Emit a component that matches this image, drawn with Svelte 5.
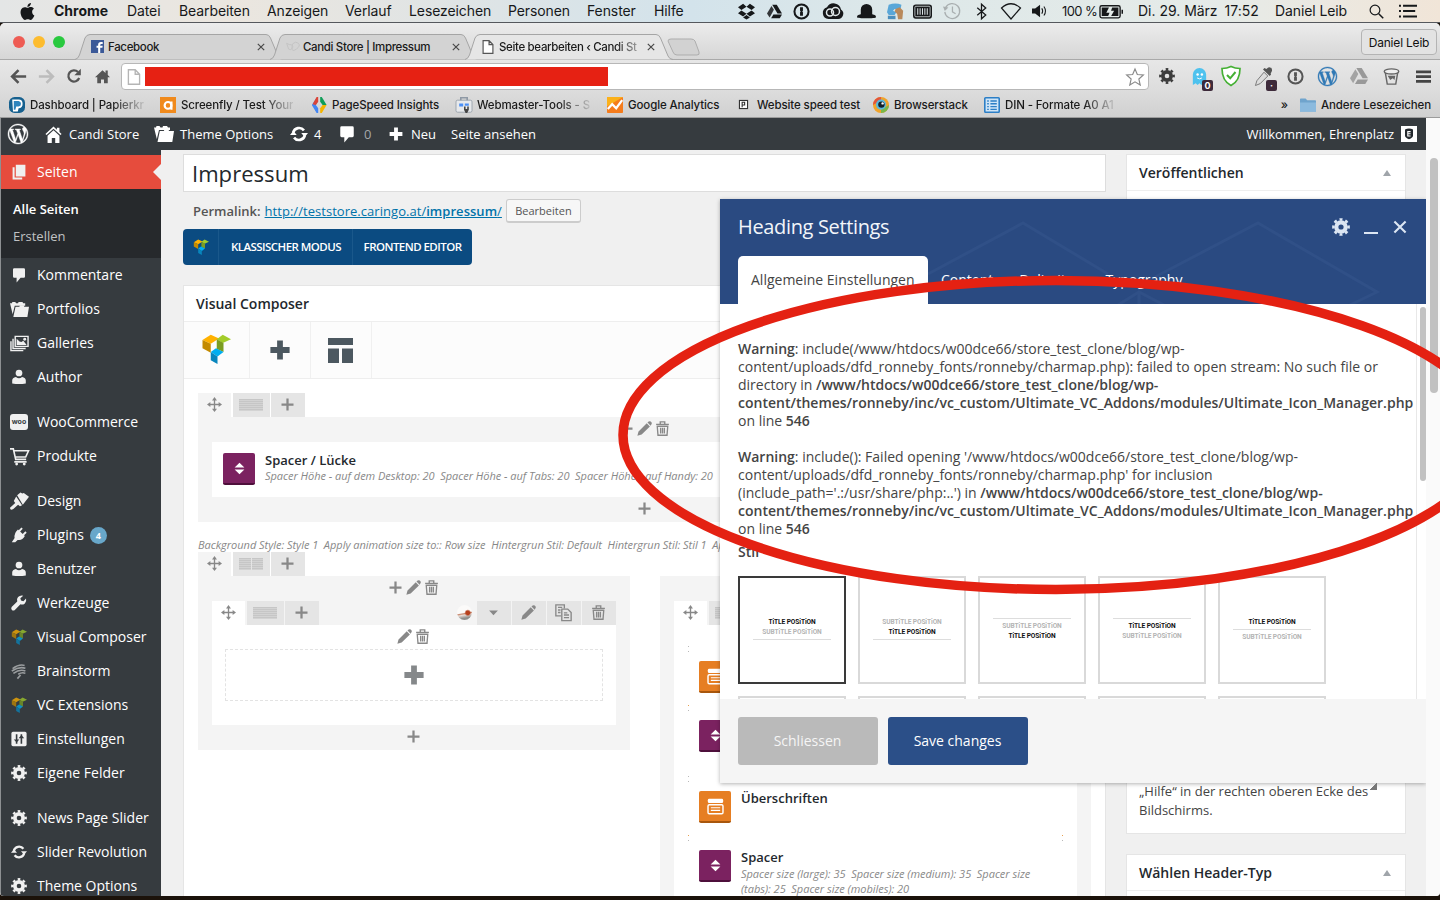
<script lang="ts">
	type MenuItem = { icon: string; label: string; gap?: boolean; count?: number };

	const WP_LOGO =
		'M21.469 6.825c.84 1.537 1.318 3.3 1.318 5.175 0 3.979-2.156 7.456-5.363 9.325l3.295-9.527c.615-1.54.82-2.771.82-3.864 0-.405-.026-.78-.07-1.11m-7.981.105c.647-.03 1.232-.105 1.232-.105.582-.075.514-.93-.067-.899 0 0-1.755.135-2.88.135-1.064 0-2.85-.15-2.85-.15-.585-.03-.661.855-.075.885 0 0 .54.061 1.125.09l1.68 4.605-2.37 7.08L5.354 6.9c.649-.03 1.234-.1 1.234-.1.585-.075.516-.93-.065-.896 0 0-1.746.138-2.874.138-.2 0-.438-.008-.69-.015C4.911 3.15 8.235 1.215 12 1.215c2.809 0 5.365 1.072 7.286 2.833-.046-.003-.091-.009-.141-.009-1.06 0-1.812.923-1.812 1.914 0 .89.513 1.643 1.06 2.531.411.72.89 1.643.89 2.977 0 .915-.354 1.994-.821 3.479l-1.075 3.585-3.9-11.61zM12 22.784c-1.059 0-2.081-.153-3.048-.437l3.237-9.406 3.315 9.087c.024.053.05.101.078.149-1.12.393-2.325.609-3.582.609M1.211 12c0-1.564.336-3.05.935-4.39L7.29 21.709C3.694 19.96 1.212 16.271 1.211 12M12 0C5.385 0 0 5.385 0 12s5.385 12 12 12 12-5.385 12-12S18.615 0 12 0';
	const APPLE =
		'M12.152 6.896c-.948 0-2.415-1.078-3.96-1.04-2.04.027-3.91 1.183-4.961 3.014-2.117 3.675-.546 9.103 1.519 12.09 1.013 1.454 2.208 3.09 3.792 3.039 1.52-.065 2.09-.987 3.935-.987 1.831 0 2.35.987 3.96.948 1.637-.026 2.676-1.48 3.676-2.948 1.156-1.688 1.636-3.325 1.662-3.415-.039-.013-3.182-1.221-3.22-4.857-.026-3.04 2.48-4.494 2.597-4.559-1.429-2.09-3.623-2.324-4.39-2.376-2-.156-3.675 1.09-4.61 1.09zM15.53 3.83c.843-1.012 1.4-2.427 1.245-3.83-1.207.052-2.662.805-3.532 1.818-.78.896-1.454 2.338-1.273 3.714 1.338.104 2.715-.688 3.559-1.701';

	// all glyphs share a 20×20 box
	const icons: Record<string, string> = {
		apple: `<path transform="scale(.83)" d="${APPLE}"/>`,
		wordpress: `<path transform="scale(.833)" stroke="currentColor" stroke-width=".5" d="${WP_LOGO}"/>`,
		dropbox: '<path d="M6 1L0 5l4 3.200L10 4.500zM14 1l6 4-4 3.200L10 4.500zM0 12l4-3.300 6 3.800L6 16zM20 12l-4-3.300-6 3.800L14 16zM6 17l4-3 4 3-4 2.500z"/>',
		drive: '<path d="M7 1h6l7 11.500h-6z"/><path d="M6 2.500l3.200 5.200L3.500 18 0 12.500z" opacity=".85"/><path d="M8.500 14H20l-3 5H5.500z"/>',
		onepass: '<circle cx="10" cy="10" r="8.300" fill="none" stroke="currentColor" stroke-width="2.400"/><path d="M8.300 5h3.400v4l-.8 1 .8 1v4H8.300v-4l.8-1-.8-1z"/>',
		cloud: '<path d="M5.500 18a6 6 0 01-1.500-11.700A7.500 7.500 0 0118 8.500 5.200 5.200 0 0115 18z"/><g fill="none" stroke="#e2e9ea" stroke-width="1.500"><circle cx="7" cy="11.500" r="3.500"/><circle cx="12.500" cy="10.500" r="4"/></g>',
		hat: '<path d="M4 13V8a6 6 0 0112 0v5c3 .5 4 1.500 4 3s-20 1.500-20 0 1-2.500 4-3z"/>',
		hand: '<path fill="#59a7d8" d="M2 2q8-3 15 0l-1 5H9L7 9l4 2-2 3H2l-2-3z"/><path fill="#4c8fbd" d="M1 15h9v4H1z"/><path fill="#b98a5c" d="M10 7l5-2 4 4-1 10h-5l-1-6-3-3z"/>',
		memory: '<rect x="0" y="2.500" width="20" height="15" rx="3"/><rect x="2" y="4.500" width="16" height="11" rx="1" fill="none" stroke="#dce4e6" stroke-width=".8"/><path stroke="#dce4e6" stroke-width="1.100" d="M5 6.500v7M7.500 6.500v7M10 6.500v7M12.500 6.500v7M15 6.500v7"/>',
		timemachine: '<path fill="none" stroke="currentColor" stroke-width="1.400" d="M3 6a8.300 8.300 0 11-1 5M10.500 5v6l3.500 2"/><path d="M0 5l6 1-4 4z"/>',
		bluetooth: '<path fill="none" stroke="currentColor" stroke-width="1.500" d="M5 5.500l10 8.500-5 4.500v-17L15 6 5 14.500"/>',
		wifi: '<path fill="none" stroke="currentColor" stroke-width="1.200" d="M.5 7Q10-1.500 19.500 7L10 18z"/>',
		speaker: '<path d="M0 6.500h4.500l7-5.500v18l-7-5.500H0z"/><path fill="none" stroke="currentColor" stroke-width="1.500" d="M14 6q2.500 4 0 8M17 3.500q4.500 6.500 0 13"/>',
		battery: '<rect x="0" y="5" width="17.500" height="10.500" rx="1.500" fill="none" stroke="currentColor" stroke-width="1.200"/><path d="M1.500 6.500h6.300L5.500 11h2.800l-1.200 3H1.500zM16 6.500V14H9.700l2.600-4.700H9.600l1-2.800zM18.700 8.500h1.300v3.500h-1.300z"/>',
		search: '<circle cx="8" cy="8" r="6.500" fill="none" stroke="currentColor" stroke-width="1.600"/><path stroke="currentColor" stroke-width="2" d="M13 13l6 6"/>',
		list: '<path d="M0 3h2.200v2.200H0zM0 9h2.200v2.200H0zM0 15h2.200v2.200H0zM4.500 3H20v2.200H4.500zM4.500 9H18v2.200H4.500zM4.500 15H20v2.200H4.500z"/>',
		back: '<path fill="none" stroke="currentColor" stroke-width="3" d="M19 10H3M10 2.500L2.500 10l7.500 7.500"/>',
		forward: '<path fill="none" stroke="currentColor" stroke-width="3" d="M1 10h16M10 2.500l7.500 7.500-7.500 7.500"/>',
		reload: '<path fill="none" stroke="currentColor" stroke-width="2.800" d="M16.500 12.500a7 7 0 11-1.500-7.500"/><path d="M18.500 1v8h-8z"/>',
		chromehome: '<path d="M10 1.500L0 11h3v8h5v-5h4v5h5v-8h3l-3-3V2h-3v3.200z"/>',
		page: '<path fill="#fff" stroke="currentColor" stroke-width="1.700" d="M3 1h8.500L17 6.500V19H3zM11.500 1v5.500H17"/>',
		star: '<path fill="none" stroke="currentColor" stroke-width="1.300" d="M10 1l2.600 6.200 6.700.6-5 4.500 1.500 6.600L10 15.400l-5.800 3.500 1.500-6.600-5-4.500 6.700-.6z"/>',
		gear: '<circle cx="10" cy="10" r="5.200" fill="none" stroke="currentColor" stroke-width="4.600"/><circle cx="10" cy="10" r="8.400" fill="none" stroke="currentColor" stroke-width="2.900" pathLength="16" stroke-dasharray="1 1" stroke-dashoffset=".5"/>',
		ghost: '<path fill="#4ec2ee" d="M3 19V8a7 7 0 0114 0v11l-3-2-2 2-2-2-2 2-2-2z"/><circle cx="8" cy="8" r="1.300" fill="#fff"/><circle cx="12.500" cy="8" r="1.300" fill="#fff"/><path stroke="#fff" fill="none" d="M7.500 11.500q2.500 2 5 0"/>',
		shield: '<path fill="#fff" stroke="#45b034" stroke-width="1.700" d="M10 .5q4 2 9 2 0 12.500-9 17-9-4.500-9-17 5 0 9-2z"/><path fill="none" stroke="#45b034" stroke-width="2" d="M6 9l3.200 3.300L14.500 6"/>',
		dropper: '<path fill="#555" d="M13 2l2-1.500q4-1 4 3.500l-1.500 3 .5 1-1.500 1.500-7-7L11 1z"/><path fill="#ddd" stroke="#777" d="M10.500 5.500l4 4-8 8-5 2 1.500-5z"/>',
		cup: '<path fill="#e2e2e2" stroke="currentColor" stroke-width="1.700" d="M2.500 4L5 19h10l2.500-15z"/><ellipse cx="10" cy="4" rx="8.500" ry="3" fill="#eee" stroke="currentColor" stroke-width="1.700"/><path d="M5.500 9h9l-1 5-2-2-3 2z"/>',
		menu: '<path d="M0 2h20v3.600H0zM0 8.300h20v3.600H0zM0 14.600h20v3.600H0z"/>',
		home: '<path d="M10 .5L.5 9.500l1.300 1.200L10 3.200l8.200 7.500 1.300-1.200-2.500-2.400V2h-3v2.300z"/><path d="M10 5l-7 6.500V20h5v-6h4v6h5v-8.500z"/>',
		folder: '<path d="M0 3.500h2l.5-1.500h3l1 1.500h2L9 2h4l1 1.500h2V6H5L2.800 15z"/><path d="M5.800 7h4l.7-1.500h4L15 7h5l-1.700 11H3.500z"/>',
		refresh: '<path fill="none" stroke="currentColor" stroke-width="2.900" d="M3.500 8.500a6.800 6.800 0 0112-2.500M16.500 11.500a6.800 6.800 0 01-12 2.500"/><path d="M12.500 9H20l-3.700 4.500zM7.500 11H0l3.700-4.500z"/>',
		comment: '<path d="M4 1.500h12q1.500 0 1.500 1.500v9q0 1.500-1.500 1.500h-4L7 19.500v-6H4Q2.500 13.500 2.500 12V3q0-1.500 1.500-1.500z"/>',
		plus: '<path d="M7.600 2h4.800v5.600H18v4.800h-5.600V18H7.600v-5.600H2V7.600h5.600z"/>',
		thinplus: '<path d="M8.500 2h3v6.500H18v3h-6.500V18h-3v-6.500H2v-3h6.500z"/>',
		pages: '<path d="M6 1h12v14.500H6z"/><path d="M2 4h2.500v13H14V19.500H2z"/>',
		gallery: '<path fill="none" stroke="currentColor" stroke-width="1.500" d="M5.500 2.500H19v10.500H5.500zM3.200 5V15.200H16.500M1 7.500V17.500h13"/><path d="M7 11.500V5l3 3 2 .5 2-1.500 3.500 4.500z"/><circle cx="15.500" cy="5.500" r="1.500"/>',
		user: '<circle cx="10" cy="5" r="4.200"/><path d="M1.500 18v-3.500Q1.500 11 6.200 10q3.800 3 7.600 0 4.700 1 4.700 4.500V18q-8.500 1.500-17 0z"/>',
		cart: '<path fill="none" stroke="currentColor" stroke-width="1.700" d="M0 2h3.500L6 13h11M4 4h15.500l-3 6.500H6M4.500 15.700h13"/><circle cx="7" cy="18" r="1.500"/><circle cx="15" cy="18" r="1.500"/>',
		brush: '<path d="M7.500 3.500L11 .5l2 1 1.500-.5L20 5l-6.500 8.500zM6.500 4.700l6.200 9.300-2.200 1-2-1.700L3.500 18Q0 20 0 16.500l5.500-4.800L4 9.500z"/>',
		plug: '<path d="M13 .5l1.700 1.700-3.300 3.300 3.200 3.200 3.300-3.300 1.700 1.700L16.300 10.400l1 1q-3.500 6.200-9 4.700l-3 3H1l3.500-5.300Q3.500 7.500 8.700 3l1 1z"/>',
		wrench: '<path d="M18.800 4.500l-3.300 3.300-3-.8-.8-2.800L15.300.8q-3.800-1-6.500 1.700-2 2.300-1 5.500l-7 7q-1.200 2 .3 3.700 1.700 1.300 3.700 0l7-7q3 1 5.500-1.200 2.500-2.500 1.500-6z"/>',
		vc: '<path fill="#ffb100" d="M1 4l5.500-3.500L12 3 6.500 6.500z"/><path fill="#c38a00" d="M1 4l5.500 2.500v6L1 9.500z"/><path fill="#a3cc2a" d="M10.500 3.500l4-3L20 3.500 14.500 6z"/><path fill="#7b9d22" d="M10.500 3.500l4.500 2.500v6l-4.500-2z"/><path fill="#00aef0" d="M6.500 12L10 9.500l5 2.500-4 3z"/><path fill="#0886bd" d="M6.500 12l4.500 3v5l-4.500-2.500z"/>',
		storm: '<g fill="none" stroke="#9a9d9f" stroke-width="2"><path d="M2 7q8-6 15-4M1 10q9-6 17-3.500M3 13q8-6 15-3M9 14q5-3 9-1M12 15l-4 4.500"/></g>',
		sliders: '<rect x="0.500" y="1" width="19" height="18" rx="2"/><path stroke="#363b3f" stroke-width="2" d="M7 4v12M13 4v12"/><path fill="#363b3f" d="M3.500 10.500h7L7 14.500zM9.500 9h7L13 5z"/>',
		move: '<path d="M9.100 4.500H6.700L10 0l3.300 4.500h-2.400v4.600h4.600V6.700L20 10l-4.500 3.300v-2.400h-4.600v4.600h2.400L10 20l-3.300-4.500h2.400v-4.600H4.500v2.400L0 10l4.500-3.300v2.400h4.600z"/>',
		pencil: '<path d="M13 3l4.200 4.200L6.200 18 .5 19.800 2 14zM14 2l1.500-1.300Q17-.3 18.300.8l1 1q1 1.300 0 2.500L18.200 6.200z"/>',
		trash: '<path fill="none" stroke="currentColor" stroke-width="1.800" d="M1.500 4.500h17M7 4V1.200h6V4M3 7l1 12h12l1-12zM7.500 9v7.500M10 9v7.500M12.500 9v7.500"/>',
		copy: '<path fill="none" stroke="currentColor" stroke-width="1.600" d="M7 14H1V1h10v4M8 6h7l4 4v9.500H8zM3.500 4h5M3.500 7h3M3.500 10h3M10.500 10.500h4M10.500 13h6M10.500 16h6"/>',
		down: '<path d="M2 6.500h16L10 15z"/>',
		template: '<path d="M0 0h20v5.500H0zM0 8.300h8.800V20H0zM11.200 8.300H20V20h-8.800z"/>',
		updown: '<path d="M10 1l7.500 7.500h-15zM10 19l7.500-7.500h-15z"/>',
		heading: '<rect x="1" y="1" width="18" height="5" rx="1.500"/><rect x="1.200" y="8" width="17.600" height="10.500" rx="1.500" fill="none" stroke="currentColor" stroke-width="1.700"/><path stroke="currentColor" stroke-width="1.300" d="M4.500 11.500h11M4.500 14.500h11"/>',
		close: '<path fill="none" stroke="currentColor" stroke-width="3" d="M2 2l16 16M18 2L2 18"/>',
		facebook: '<rect width="20" height="20" fill="#3b5998"/><path fill="#fff" d="M11 20v-8H8.500V9H11V7q0-4 4.300-4H18v3h-2q-1.800 0-1.800 1.600V9H18l-.5 3h-3.300v8z"/>',
		rings: '<g fill="none" stroke="#c3c3c3" stroke-width="1.500"><path d="M1 5l3 9q4 3 6-2T5 7zM10 6q5-5 9-1t-3 9-7-2z"/></g>',
		papier: '<rect x="0" y="0" width="20" height="20" rx="7" fill="#17618f"/><path fill="#fff" d="M4 3h8q5 0 5 5.500T12 14l-1 4H5z"/><path fill="#2d84bd" d="M6 5h6q3 .5 3 3.500T12 12H9l-1 4H6z"/>',
		screenfly: '<rect width="20" height="20" fill="#f08a1c"/><circle cx="10" cy="10.500" r="4.200" fill="none" stroke="#fff" stroke-width="2.700"/><path stroke="#fff" stroke-width="2.700" d="M14.300 5.500V16"/>',
		pagespeed: '<path fill="#4285f4" d="M7 1L1 10l6 10h2V14l-3-4 3-5z"/><path fill="#db4437" d="M7 0h2v6L6 10 2 9z"/><path fill="#0f9d58" d="M11.500 0h2l6 10h-5l-3-4z"/><path fill="#f4b400" d="M11.500 20h2l6-10h-5l-3 4z"/>',
		webmaster: '<rect x="0" y="4" width="20" height="15" rx="2" fill="#e7e9ec" stroke="#8f99a5"/><path fill="none" stroke="#8f99a5" stroke-width="2" d="M6 4V1h8v3"/><path fill="#4b8ff5" d="M4 8h5v4H4zM11 8h5v3h-5z"/><path fill="#444" d="M10 12h2v3h2v-3h2v4l-2 4h-2l-2-4z"/>',
		analytics: '<rect width="20" height="20" rx="1" fill="#f57c1c"/><path fill="#fbb11b" d="M0 0h20L0 12z"/><path fill="none" stroke="#fff" stroke-width="2.800" d="M1 15l5.500-6 5 5L19 4"/>',
		speedtest: '<rect x="1" y="1" width="18" height="18" fill="#fff" stroke="#333" stroke-width="2.500"/><path fill="none" stroke="#333" stroke-width="2.500" d="M7 16V5h5.500v6H7"/>',
		browserstack: '<circle cx="10" cy="10" r="10" fill="#f0a32b"/><path fill="#e4553a" d="M0 10A10 10 0 0110 0v4z"/><path fill="#7ab84a" d="M20 10a10 10 0 01-10 10v-4z"/><circle cx="10" cy="9.500" r="6.300" fill="#58b8dd"/><circle cx="10.500" cy="9.500" r="4" fill="#13202b"/><circle cx="12" cy="8" r="1.500" fill="#fff"/>',
		din: '<rect x="1" y="1" width="18" height="18" rx="1" fill="#cfe5f7" stroke="#2d7fc6" stroke-width="2"/><path stroke="#2d7fc6" stroke-width="1.700" d="M4 5h2M4 8.500h2M4 12h2M4 15.500h2M8 5h8M8 8.500h8M8 12h8M8 15.500h8"/>',
		macfolder: '<path fill="#6fa4cd" d="M0 3q0-1 1-1h6l2 2h10q1 0 1 1v13H0z"/><path fill="#8bbade" d="M0 7h20v11.500H0z"/>',
		badge: '<rect width="20" height="20" fill="#fff"/><path fill="#23282d" d="M5 4.500Q10 2 15 4.500V12q0 3-5 4.500Q5 15 5 12z"/><path fill="none" stroke="#fff" stroke-width="1.400" d="M12 7H8.500v5.500H12M8.500 9.700H12"/>'
	};

	const appMenus = ['Datei', 'Bearbeiten', 'Anzeigen', 'Verlauf', 'Lesezeichen', 'Personen', 'Fenster', 'Hilfe'];
	const appMenuWidths = [52, 88, 78, 64, 99, 79, 67, 40];

	const trayIcons = [
		{ icon: 'dropbox', slot: 28, size: 17 },
		{ icon: 'drive', slot: 28, size: 15 },
		{ icon: 'onepass', slot: 26, size: 17 },
		{ icon: 'cloud', slot: 38, size: 20 },
		{ icon: 'hat', slot: 28, size: 19 },
		{ icon: 'hand', slot: 30, size: 17 },
		{ icon: 'memory', slot: 24, size: 19 },
		{ icon: 'timemachine', slot: 36, size: 18 },
		{ icon: 'bluetooth', slot: 22, size: 17 },
		{ icon: 'wifi', slot: 38, size: 20 },
		{ icon: 'speaker', slot: 18, size: 14 }
	];

	const tabs = [
		{ icon: 'facebook', title: 'Facebook' },
		{ icon: 'rings', title: 'Candi Store | Impressum' },
		{ icon: 'page', title: 'Seite bearbeiten ‹ Candi St', active: true }
	];

	const extensions = [
		{ icon: 'gear', color: '#3c3c3c', size: 16 },
		{ icon: 'ghost', color: '#4ec2ee', size: 19, badge: '0' },
		{ icon: 'shield', color: '#45b034', size: 20 },
		{ icon: 'dropper', color: '#555', size: 19, badge: '·' },
		{ icon: 'onepass', color: '#555', size: 17 },
		{ icon: 'wordpress', color: '#3079b5', size: 19 },
		{ icon: 'drive', color: '#999', size: 18 },
		{ icon: 'cup', color: '#666', size: 17 },
		{ icon: 'menu', color: '#444', size: 15 }
	];

	const bookmarks = [
		{ icon: 'papier', label: 'Dashboard | Papierkr', slot: 151, fade: true },
		{ icon: 'screenfly', label: 'Screenfly / Test Your', slot: 151, fade: true },
		{ icon: 'pagespeed', label: 'PageSpeed Insights', slot: 145 },
		{ icon: 'webmaster', label: 'Webmaster-Tools - S', slot: 151, fade: true },
		{ icon: 'analytics', label: 'Google Analytics', slot: 129 },
		{ icon: 'speedtest', label: 'Website speed test', slot: 141, small: true },
		{ icon: 'browserstack', label: 'Browserstack', slot: 111 },
		{ icon: 'din', label: 'DIN - Formate A0 A1', slot: 140, fade: true }
	];

	const menu: MenuItem[] = [
		{ icon: 'comment', label: 'Kommentare' },
		{ icon: 'folder', label: 'Portfolios' },
		{ icon: 'gallery', label: 'Galleries' },
		{ icon: 'user', label: 'Author' },
		{ icon: 'woo', label: 'WooCommerce', gap: true },
		{ icon: 'cart', label: 'Produkte' },
		{ icon: 'brush', label: 'Design', gap: true },
		{ icon: 'plug', label: 'Plugins', count: 4 },
		{ icon: 'user', label: 'Benutzer' },
		{ icon: 'wrench', label: 'Werkzeuge' },
		{ icon: 'vc', label: 'Visual Composer' },
		{ icon: 'storm', label: 'Brainstorm' },
		{ icon: 'vc', label: 'VC Extensions' },
		{ icon: 'sliders', label: 'Einstellungen' },
		{ icon: 'gear', label: 'Eigene Felder' },
		{ icon: 'gear', label: 'News Page Slider', gap: true },
		{ icon: 'refresh', label: 'Slider Revolution' },
		{ icon: 'gear', label: 'Theme Options' }
	];
	const wideIcons = ['folder', 'gallery', 'cart', 'brush'];

	const elements = [
		{ kind: 'heading', space: 59 },
		{ kind: 'spacer', space: 71 },
		{ kind: 'heading', space: 59, title: 'Überschriften' },
		{
			kind: 'spacer',
			space: 59,
			title: 'Spacer',
			desc: 'Spacer size (large): 35  Spacer size (medium): 35  Spacer size (tabs): 25  Spacer size (mobiles): 20'
		}
	];

	const T = 'TiTLE POSiTiON';
	const S = 'SUBTiTLE POSiTiON';
	// "-" is the delimiter line
	const styles = [
		[T, S, '-'],
		[S, T, '-'],
		['-', S, T],
		['-', T, S],
		[T, '-', S]
	];
</script>

{#snippet icon(name: string, size: number)}
	<svg class="icon" width={size} height={size} viewBox="0 0 20 20" fill="currentColor" aria-hidden="true">
		{@html icons[name]}
	</svg>
{/snippet}

{#snippet rowTabs(cols: number)}
	<span class="rt move">{@render icon('move', 15)}</span>
	<span class="rt layout">
		{#each Array(cols) as _}<i></i>{/each}
	</span>
	<span class="rt">{@render icon('thinplus', 15)}</span>
{/snippet}

{#snippet elementIcon(kind: string)}
	<span class="el-icon {kind}">{@render icon(kind === 'spacer' ? 'updown' : 'heading', kind === 'spacer' ? 13 : 17)}</span>
{/snippet}

<div class="desktop">
	<header class="menubar">
		<span class="apple">{@render icon('apple', 17)}</span>
		<b class="app">Chrome</b>
		{#each appMenus as item, i}
			<span class="mi" style="width: {appMenuWidths[i]}px">{item}</span>
		{/each}
		<div class="tray">
			{#each trayIcons as t}
				<span class="slot {t.icon}" style="width: {t.slot}px">{@render icon(t.icon, t.size)}</span>
			{/each}
			<span class="percent">100 %</span>
			<span class="batt">{@render icon('battery', 23)}</span>
			<span class="date">Di. 29. März&ensp;17:52</span>
			<span class="who">Daniel Leib</span>
			<span class="find">{@render icon('search', 15)}</span>
			<span>{@render icon('list', 18)}</span>
		</div>
	</header>

	<div class="window">
		<div class="tabstrip">
			<div class="lights"><i></i><i></i><i></i></div>
			{#each tabs as tab}
				<div class="tab" class:active={tab.active}>
					<svg class="shape" width="208" height="26" viewBox="0 0 208 26">
						<path d="M0 25.500Q3 25 4.500 21L10 4Q11.500 .5 15 .5H191Q194 .5 195.500 4L203 22Q204.500 25.500 208 25.500" />
					</svg>
					<span class="fav">{@render icon(tab.icon, tab.active ? 14 : 13)}</span>
					<span class="tab-title">{tab.title}</span>
					<span class="x">{@render icon('close', 8)}</span>
				</div>
			{/each}
			<svg class="newtab" width="34" height="18" viewBox="0 0 34 18">
				<path d="M1 3Q1 1 4 1H24Q27 1 28 3L32 14Q33 17 30 17H10Q7 17 6 14Z" />
			</svg>
			<button class="profile">Daniel Leib</button>
		</div>

		<div class="toolbar">
			<span class="nav">{@render icon('back', 17)}</span>
			<span class="nav off">{@render icon('forward', 17)}</span>
			<span class="nav">{@render icon('reload', 16)}</span>
			<span class="nav">{@render icon('chromehome', 15)}</span>
			<div class="omnibox">
				<span class="doc">{@render icon('page', 16)}</span>
				<span class="redacted"></span>
				<span class="fav-star">{@render icon('star', 18)}</span>
			</div>
			{#each extensions as ext}
				<span class="ext" style="color: {ext.color}">
					{@render icon(ext.icon, ext.size)}
					{#if ext.badge}<em>{ext.badge}</em>{/if}
				</span>
			{/each}
		</div>

		<div class="bookmarks">
			{#each bookmarks as bm}
				<span class="bm" class:small={bm.small} style="width: {bm.slot}px">
					{@render icon(bm.icon, bm.small ? 9 : 16)}
					<span class:fade={bm.fade}>{bm.label}</span>
				</span>
			{/each}
			<span class="more">»</span>
			<span class="other">{@render icon('macfolder', 16)}<span>Andere Lesezeichen</span></span>
		</div>

		<div class="page">
			<div class="viewport">
				<div class="adminbar">
					<span class="wp">{@render icon('wordpress', 20)}</span>
					<span class="site">{@render icon('home', 17)}Candi Store</span>
					<span class="theme">{@render icon('folder', 20)}Theme Options</span>
					<span class="upd">{@render icon('refresh', 18)}4</span>
					<span class="com">{@render icon('comment', 18)}<i>0</i></span>
					<span class="new">{@render icon('plus', 16)}Neu</span>
					<span>Seite ansehen</span>
					<span class="welcome">Willkommen, Ehrenplatz {@render icon('badge', 16)}</span>
				</div>

				<div class="body">
					<nav class="side">
						<a class="item current" href="#seiten"><span class="ic">{@render icon('pages', 16)}</span>Seiten</a>
						<div class="submenu">
							<b>Alle Seiten</b>
							<span>Erstellen</span>
						</div>
						{#each menu as m}
							<a class="item" class:gap={m.gap} href="#menu">
								<span class="ic" class:dim={m.icon === 'vc'}>
									{#if m.icon === 'woo'}
										<span class="woo">woo</span>
									{:else}
										{@render icon(m.icon, wideIcons.includes(m.icon) ? 19 : 16)}
									{/if}
								</span>
								{m.label}
								{#if m.count}<span class="count">{m.count}</span>{/if}
							</a>
						{/each}
					</nav>

					<main class="editor">
						<div class="title-input">Impressum</div>
						<div class="permalink">
							<b>Permalink:</b>
							<a href="#permalink">http://teststore.caringo.at/<b>impressum</b>/</a>
							<button>Bearbeiten</button>
						</div>
						<div class="switch">
							<span class="logo">{@render icon('vc', 16)}</span>
							<span class="classic">KLASSISCHER MODUS</span>
							<span class="front">FRONTEND EDITOR</span>
						</div>

						<section class="composer">
							<h2>Visual Composer</h2>
							<div class="vc-bar">
								<span class="first">{@render icon('vc', 30)}</span>
								<span>{@render icon('plus', 24)}</span>
								<span>{@render icon('template', 25)}</span>
							</div>
							<div class="canvas">
								<div class="row-tabs">{@render rowTabs(1)}</div>
								<div class="col">
									<div class="ctl">
										{@render icon('thinplus', 15)}{@render icon('pencil', 15)}{@render icon('trash', 15)}
									</div>
									<div class="element">
										{@render elementIcon('spacer')}
										<div>
											<h4>Spacer / Lücke</h4>
											<p class="nowrap">Spacer Höhe - auf dem Desktop: 20&nbsp; Spacer Höhe - auf Tabs: 20&nbsp; Spacer Höhe - auf Handy: 20</p>
										</div>
									</div>
									<div class="ctl">{@render icon('thinplus', 15)}</div>
								</div>

								<p class="params">Background Style: Style 1&nbsp; Apply animation size to:: Row size&nbsp; Hintergrun Stil: Default&nbsp; Hintergrun Stil: Stil 1&nbsp; Apply</p>
								<div class="row-tabs">{@render rowTabs(2)}</div>
								<div class="cols">
									<div class="col half">
										<div class="ctl">
											{@render icon('thinplus', 15)}{@render icon('pencil', 15)}{@render icon('trash', 15)}
										</div>
										<div class="row-tabs inner">
											{@render rowTabs(1)}
											<span class="thumb"></span>
											<span class="rt">{@render icon('down', 11)}</span>
											<span class="rt">{@render icon('pencil', 15)}</span>
											<span class="rt">{@render icon('copy', 17)}</span>
											<span class="rt">{@render icon('trash', 15)}</span>
										</div>
										<div class="inner-row">
											<div class="ctl">{@render icon('pencil', 15)}{@render icon('trash', 15)}</div>
											<div class="drop">{@render icon('plus', 24)}</div>
										</div>
										<div class="ctl">{@render icon('thinplus', 15)}</div>
									</div>
									<div class="col half second">
										<div class="ctl"></div>
										<div class="row-tabs inner">{@render rowTabs(1)}</div>
										<div class="stack">
											{#each elements as el}
												<div class="stacked" style="height: {el.space}px">
													{@render elementIcon(el.kind)}
													{#if el.title}
														<div>
															<h4>{el.title}</h4>
															{#if el.desc}<p>{el.desc}</p>{/if}
														</div>
													{/if}
													<i class="edge {el.kind}"></i>
													{#if el.desc}<i class="edge right"></i>{/if}
												</div>
											{/each}
										</div>
									</div>
								</div>
							</div>
						</section>
					</main>

					<aside class="meta">
						<section class="box publish">
							<h3>Veröffentlichen<i></i></h3>
							<p>„Hilfe“ in der rechten oberen Ecke des Bildschirms.</p>
						</section>
						<section class="box">
							<h3>Wählen Header-Typ<i></i></h3>
						</section>
					</aside>
				</div>

				<div class="modal" role="dialog" aria-label="Heading Settings">
					<div class="modal-head">
						<svg class="pattern" width="706" height="105" viewBox="0 0 706 105">
							<path d="M208 75L303 24 388 75M435 78L538 24 657 93 628 107M398 106L419 93 444 106M419 93V106" />
						</svg>
						<div class="modal-title">
							<h1>Heading Settings</h1>
							{@render icon('gear', 18)}
							<span class="min"></span>
							{@render icon('close', 14)}
						</div>
						<div class="modal-tabs">
							<span class="on">Allgemeine Einstellungen</span>
							<span>Content</span>
							<span>Delimiter</span>
							<span>Typography</span>
						</div>
					</div>
					<div class="modal-body">
						<p>
							<b>Warning</b>: include(/www/htdocs/w00dce66/store_test_clone/blog/wp-<br />
							content/uploads/dfd_ronneby_fonts/ronneby/charmap.php): failed to open stream: No such file or<br />
							directory in <b>/www/htdocs/w00dce66/store_test_clone/blog/wp-<br />
							content/themes/ronneby/inc/vc_custom/Ultimate_VC_Addons/modules/Ultimate_Icon_Manager.php</b><br />
							on line <b>546</b>
						</p>
						<p>
							<b>Warning</b>: include(): Failed opening '/www/htdocs/w00dce66/store_test_clone/blog/wp-<br />
							content/uploads/dfd_ronneby_fonts/ronneby/charmap.php' for inclusion<br />
							(include_path='.:/usr/share/php:..') in <b>/www/htdocs/w00dce66/store_test_clone/blog/wp-<br />
							content/themes/ronneby/inc/vc_custom/Ultimate_VC_Addons/modules/Ultimate_Icon_Manager.php</b><br />
							on line <b>546</b>
						</p>
						<h5>Stil</h5>
						<div class="styles">
							{#each styles as lines, i}
								<div class="style" class:low={lines[0] === '-'} class:selected={i === 0}>
									{#each lines as line}
										{#if line === '-'}
											<hr />
										{:else}
											<span class:strong={line === T}>{line}</span>
										{/if}
									{/each}
								</div>
							{/each}
							{#each styles as _}<div class="style"></div>{/each}
						</div>
						<i class="inner-thumb"></i>
					</div>
					<div class="modal-foot">
						<button class="grey">Schliessen</button>
						<button>Save changes</button>
						<i class="grip"></i>
					</div>
				</div>
			</div>
			<div class="scrollbar"><i></i></div>
		</div>
	</div>

	<svg class="marker" width="1440" height="900" viewBox="0 0 1440 900" aria-hidden="true">
		<ellipse cx="1056" cy="435" rx="433" ry="154.500" />
	</svg>
</div>

<style>
	:global(body) {
		overflow: hidden;
	}
	.desktop {
		position: relative;
		width: 1440px;
		height: 900px;
		overflow: hidden;
		display: flex;
		flex-direction: column;
		background: #1b120a;
		font-family: 'Open Sans', sans-serif;
	}
	.desktop :global(*) {
		box-sizing: border-box;
	}
	.icon {
		display: block;
		flex: none;
		overflow: visible;
	}
	h1, h2, h3, h4, h5, p {
		margin: 0;
	}
	button {
		font-family: inherit;
		padding: 0;
	}
	a {
		color: inherit;
		text-decoration: none;
	}

	/* macOS menu bar */
	.menubar {
		height: 23px;
		flex: none;
		display: flex;
		align-items: center;
		border-bottom: 1px solid #55585d;
		background: linear-gradient(90deg, #e4e6e6, #ebe6df 16%, #dfe4e5 32%, #d3e3eb 48%, #dde8e9 62%, #e6ebe8 85%, #f1e5d8);
		font: 14px/22px Inter, sans-serif;
		letter-spacing: -0.1px;
		color: #16181a;
		white-space: nowrap;
	}
	.apple {
		width: 54px;
		padding-left: 19px;
	}
	.app {
		width: 73px;
		letter-spacing: 0;
	}
	.tray {
		margin-left: auto;
		padding-right: 23px;
		display: flex;
		align-items: center;
	}
	.slot {
		display: flex;
		justify-content: center;
	}
	.slot.timemachine {
		color: #a9afb0;
	}
	.percent {
		width: 52px;
		padding-left: 14px;
		font-size: 13px;
		letter-spacing: -0.6px;
	}
	.batt {
		width: 38px;
	}
	.date {
		width: 137px;
		letter-spacing: -0.02px;
	}
	.who {
		width: 94px;
	}
	.find {
		width: 30px;
	}

	/* browser chrome */
	.window {
		height: 873px;
		display: flex;
		flex-direction: column;
		overflow: hidden;
		border-radius: 5px 5px 4px 4px;
		background: #e3e3e3;
		font: 500 11.5px/16px Inter, sans-serif;
		letter-spacing: -0.12px;
		color: #1a1a1a;
	}
	.tabstrip {
		height: 37px;
		flex: none;
		display: flex;
		align-items: flex-end;
		background: linear-gradient(#ececec, #d6d6d6);
		border-bottom: 1px solid #a9a9a9;
	}
	.lights {
		width: 80px;
		height: 36px;
		padding: 13px 0 0 13px;
		display: flex;
		gap: 8px;
	}
	.lights i {
		width: 12px;
		height: 12px;
		border-radius: 50%;
		background: #ee5c54;
	}
	.lights i:nth-child(2) {
		background: #fdbc2f;
	}
	.lights i:nth-child(3) {
		background: #29c93f;
	}
	.tab {
		position: relative;
		width: 195px;
		height: 25px;
		padding-left: 11px;
		display: flex;
		align-items: center;
		letter-spacing: -0.35px;
	}
	.shape {
		position: absolute;
		left: -5px;
		top: 0;
	}
	.shape path {
		fill: #d3d3d3;
		stroke: #a5a5a5;
	}
	.tab.active {
		z-index: 1;
	}
	.active .shape path {
		fill: #e6e6e6;
	}
	.fav,
	.tab-title,
	.x {
		position: relative;
	}
	.tab-title {
		width: 146px;
		margin-left: 4px;
		white-space: nowrap;
	}
	.active .tab-title {
		width: 145px;
		-webkit-mask: linear-gradient(90deg, #000 80%, transparent 104%);
		mask: linear-gradient(90deg, #000 80%, transparent 104%);
	}
	.active .fav {
		color: #555;
	}
	.x {
		margin-left: 3px;
		color: #4a4a4a;
	}
	.newtab {
		margin: 0 0 3px 2px;
		fill: #d2d2d2;
		stroke: #adadad;
	}
	.profile {
		width: 76px;
		height: 26px;
		margin: 0 3px 4px auto;
		border: 1px solid #b4b4b4;
		border-radius: 4px;
		background: #e3e3e3;
		font: 400 12px Inter, sans-serif;
		letter-spacing: -0.2px;
		color: #111;
	}
	.toolbar {
		height: 32px;
		flex: none;
		display: flex;
		align-items: center;
		padding-left: 4px;
		background: linear-gradient(#e7e7e7, #dcdcdc);
		color: #555;
	}
	.nav {
		width: 28px;
		display: flex;
		justify-content: center;
	}
	.nav.off {
		color: #bcbcbc;
	}
	.omnibox {
		width: 1028px;
		height: 27px;
		margin: 1px 2px 0 5px;
		padding: 0 4px 0 4px;
		display: flex;
		align-items: center;
		border: 1px solid #b7b7b7;
		border-radius: 4px;
		background: #fff;
	}
	.doc {
		color: #b5b5b5;
	}
	.redacted {
		width: 463px;
		height: 19px;
		margin-left: 3px;
		background: #e62113;
	}
	.fav-star {
		margin-left: auto;
		color: #8a8a8a;
	}
	.ext {
		position: relative;
		width: 32px;
		display: flex;
		justify-content: center;
	}
	.ext em {
		position: absolute;
		right: 2px;
		bottom: -5px;
		width: 11px;
		height: 11px;
		border-radius: 2px;
		background: #3d2a3a;
		color: #fff;
		font: 700 9px/11px Inter, sans-serif;
		text-align: center;
	}
	.bookmarks {
		height: 26px;
		flex: none;
		display: flex;
		align-items: center;
		padding-left: 9px;
		background: linear-gradient(#dcdcdc, #d0d0d0);
		border-bottom: 1px solid #9c9c9c;
		white-space: nowrap;
	}
	.bm {
		display: flex;
		align-items: center;
		gap: 5px;
		flex: none;
	}
	.bm.small {
		gap: 9px;
		padding-left: 3px;
	}
	.bm.small + .bm {
		margin-left: -4px;
	}
	.fade {
		-webkit-mask: linear-gradient(90deg, #000 72%, transparent 104%);
		mask: linear-gradient(90deg, #000 72%, transparent 104%);
	}
	.more {
		margin-left: auto;
		padding-right: 12px;
		font-size: 12px;
	}
	.other {
		display: flex;
		gap: 5px;
		padding-right: 9px;
	}

	/* wordpress admin */
	.page {
		flex: 1;
		min-height: 0;
		display: flex;
		font: 13px/18px 'Open Sans', sans-serif;
		letter-spacing: 0;
	}
	.viewport {
		position: relative;
		width: 1426px;
		display: flex;
		flex-direction: column;
		overflow: hidden;
		background: #f0f0f0;
		border-left: 1px solid #8d9092;
	}
	.scrollbar {
		width: 14px;
		padding: 40px 0 0 4px;
		background: #fafafa;
	}
	.scrollbar i {
		display: block;
		width: 8px;
		height: 235px;
		border-radius: 4px;
		background: #c1c1c1;
	}
	.adminbar {
		height: 32px;
		flex: none;
		display: flex;
		align-items: center;
		padding: 0 9px 0 7px;
		background: #363b3f;
		color: #fff;
		font-size: 13px;
	}
	.adminbar span {
		display: flex;
		align-items: center;
		white-space: nowrap;
	}
	.wp {
		width: 37px;
	}
	.site {
		width: 109px;
		gap: 7px;
	}
	.theme {
		width: 136px;
		gap: 6px;
	}
	.upd {
		width: 48px;
		gap: 6px;
	}
	.com {
		width: 50px;
		gap: 8px;
	}
	.com i {
		font-style: normal;
		color: #a5a8aa;
	}
	.new {
		width: 63px;
		gap: 7px;
	}
	.adminbar .welcome {
		margin-left: auto;
		gap: 7px;
	}
	.body {
		flex: 1;
		min-height: 0;
		display: flex;
	}
	.side {
		width: 160px;
		flex: none;
		padding-top: 5px;
		background: #363b3f;
		font-size: 14px;
		color: #fff;
	}
	.item {
		position: relative;
		height: 34px;
		display: flex;
		align-items: center;
		white-space: nowrap;
	}
	.item.gap {
		margin-top: 11px;
	}
	.item.current {
		background: #e64c3d;
	}
	.item.current::after {
		content: '';
		position: absolute;
		right: 0;
		top: 9px;
		border: 8px solid transparent;
		border-left: 0;
		border-right-color: #f0f0f0;
	}
	.ic {
		width: 36px;
		display: flex;
		justify-content: center;
		color: #f0f0f0;
	}
	.ic.dim {
		opacity: 0.75;
	}
	.woo {
		width: 18px;
		height: 16px;
		border-radius: 3px;
		background: #f0f0f0;
		color: #363b3f;
		font: 700 7px/15px Inter, sans-serif;
		text-align: center;
	}
	.submenu {
		height: 69px;
		padding: 7px 0 0 12px;
		display: flex;
		flex-direction: column;
		background: #26292c;
		font-size: 13px;
		line-height: 27px;
	}
	.submenu b {
		font-weight: 600;
	}
	.submenu span {
		color: #c0c2c4;
	}
	.count {
		width: 17px;
		height: 17px;
		margin-left: 6px;
		border-radius: 50%;
		background: #68a7ca;
		font: 700 9px/17px 'Open Sans', sans-serif;
		text-align: center;
	}

	.editor {
		width: 923px;
		flex: none;
		margin-left: 22px;
		padding-top: 4px;
	}
	.title-input {
		height: 38px;
		padding-left: 8px;
		border: 1px solid #ddd;
		background: #fff;
		font-size: 22.1px;
		line-height: 37px;
		color: #23282d;
	}
	.permalink {
		height: 24px;
		margin-top: 7px;
		padding-left: 10px;
		display: flex;
		align-items: center;
		gap: 4px;
		color: #555;
	}
	.permalink b {
		font-weight: 600;
	}
	.permalink a {
		letter-spacing: 0.04px;
		color: #0073aa;
		text-decoration: underline;
	}
	.permalink button {
		width: 75px;
		height: 24px;
		border: 1px solid #ccc;
		border-bottom-width: 2px;
		border-radius: 3px;
		background: #f7f7f7;
		font-size: 11px;
		color: #555;
	}
	.switch {
		width: 289px;
		height: 36px;
		margin-top: 6px;
		display: flex;
		border-radius: 4px;
		background: #0b4b81;
		color: #fff;
		font-size: 11.5px;
		font-weight: 600;
		letter-spacing: -0.55px;
	}
	.switch span {
		display: flex;
		align-items: center;
		justify-content: center;
		white-space: nowrap;
	}
	.logo {
		width: 36px;
		border-right: 1px solid #1a588b;
	}
	.classic {
		width: 134px;
		padding-left: 1px;
		border-right: 1px solid #1a588b;
	}
	.front {
		flex: 1;
	}
	.composer {
		height: 720px;
		margin-top: 20px;
		border: 1px solid #e5e5e5;
		background: #fff;
	}
	.composer h2 {
		height: 36px;
		padding-left: 12px;
		border-bottom: 1px solid #eee;
		font: 600 14px/35px 'Open Sans', sans-serif;
		color: #23282d;
	}
	.vc-bar {
		height: 57px;
		display: flex;
		border-bottom: 1px solid #eee;
		background: #fcfcfc;
		color: #4c5860;
	}
	.vc-bar span {
		width: 61px;
		padding-right: 1px;
		display: flex;
		align-items: center;
		justify-content: center;
		border-right: 1px solid #f0f0f0;
	}
	.vc-bar .first {
		width: 66px;
		padding-bottom: 3px;
	}
	.canvas {
		padding: 14px 14px 0;
	}
	.row-tabs {
		height: 24px;
		display: flex;
		color: #888;
	}
	.rt {
		width: 34px;
		margin-right: 1px;
		padding: 0 1px 1px 0;
		display: flex;
		align-items: center;
		justify-content: center;
		background: #e5e5e5;
	}
	.rt.move {
		width: 33px;
		margin-right: 2px;
		padding-right: 0;
		background: #f4f4f4;
	}
	.inner .rt.move {
		background: #fff;
	}
	.rt.layout {
		width: 37px;
		gap: 1px;
	}
	.layout i {
		flex: 1;
		height: 12px;
		background: repeating-linear-gradient(#c6c6c6 0 1px, #d3d3d3 1px 2px);
	}
	.layout i:first-child {
		margin-left: 6px;
	}
	.layout i:last-child {
		margin-right: 6px;
	}
	.inner .rt:last-child {
		margin-right: 0;
	}
	.thumb {
		width: 15px;
		height: 15px;
		margin: 4px 5px 0 auto;
		border-radius: 50%;
		background:
			radial-gradient(circle at 72% 52%, #b6401c 0 14%, transparent 26%),
			linear-gradient(170deg, #fbfaf9 50%, #c98a70 56%, #e8ded8 64%, #8f8f8c 82%);
	}
	.col {
		padding: 0 14px;
		background: #f4f4f4;
	}
	.ctl {
		height: 25px;
		padding: 0 1px 2px 0;
		display: flex;
		align-items: center;
		justify-content: center;
		gap: 3px;
		color: #888;
	}
	.element {
		height: 55px;
		padding: 11px;
		display: flex;
		gap: 10px;
		background: #fff;
	}
	.el-icon {
		width: 32px;
		height: 32px;
		flex: none;
		display: flex;
		align-items: center;
		justify-content: center;
		border-radius: 2px;
		border-bottom: 2px solid #a8560c;
		background: #e67e22;
		color: #fff;
	}
	.el-icon.spacer {
		border-color: #4e0f3b;
		background: #7b2260;
	}
	h4 {
		font-size: 13px;
		font-weight: 600;
		line-height: 15px;
		color: #23282d;
	}
	.element p,
	.stacked p,
	.params {
		font-size: 11px;
		font-style: italic;
		line-height: 15px;
		letter-spacing: -0.025px;
		color: #888;
	}
	.nowrap {
		white-space: nowrap;
	}
	.params {
		height: 14px;
		margin-top: 16px;
		line-height: 13px !important;
		white-space: nowrap;
		overflow: visible;
	}
	.cols {
		display: flex;
		gap: 30px;
		align-items: flex-start;
	}
	.half {
		width: 432px;
		flex: none;
	}
	.half.second {
		width: 431px;
	}
	.inner-row {
		height: 100px;
		padding: 0 13px;
		background: #fff;
	}
	.inner-row .ctl {
		height: 24px;
	}
	.drop {
		height: 52px;
		display: flex;
		align-items: center;
		justify-content: center;
		border: 1px dashed #e3e3e3;
		color: #85888a;
	}
	.stack {
		height: 330px;
		padding: 36px 14px 0 25px;
		background: #fff;
	}
	.stacked {
		position: relative;
		display: flex;
		gap: 10px;
	}
	.stacked p {
		width: 300px;
		white-space: pre-wrap;
		margin-top: 1px;
	}
	.edge {
		position: absolute;
		left: -11px;
		top: -15px;
		width: 1px;
		height: 6px;
		border: solid #b9b9b9;
		border-width: 1px 0;
	}
	.edge.spacer,
	.edge.right {
		border-top-color: #e8a04e;
	}
	.edge.right {
		left: auto;
		right: 0;
	}

	.meta {
		width: 280px;
		flex: none;
		margin-left: 20px;
		padding-top: 4px;
	}
	.box {
		height: 200px;
		margin-bottom: 20px;
		display: flex;
		flex-direction: column;
		justify-content: space-between;
		border: 1px solid #e5e5e5;
		background: #fff;
	}
	.box.publish {
		height: 680px;
	}
	.box h3 {
		height: 36px;
		padding: 0 14px 0 12px;
		display: flex;
		align-items: center;
		justify-content: space-between;
		border-bottom: 1px solid #eee;
		font-size: 14px;
		font-weight: 600;
		color: #23282d;
	}
	.box h3 i {
		border: 4px solid transparent;
		border-top: 0;
		border-bottom: 6px solid #a0a5aa;
	}
	.box p {
		padding: 0 20px 13px 12px;
		line-height: 19px;
		color: #444;
	}

	/* element settings window */
	.modal {
		position: absolute;
		left: 719px;
		top: 81px;
		width: 706px;
		height: 584px;
		display: flex;
		flex-direction: column;
		background: #fff;
		box-shadow: 0 1px 4px rgba(0, 0, 0, 0.3);
		color: #444;
	}
	.modal-head {
		position: relative;
		height: 105px;
		flex: none;
		padding: 0 18px;
		background: #2a4a81;
		color: #fff;
	}
	.pattern {
		position: absolute;
		left: 0;
		top: 0;
		fill: none;
		stroke: #305087;
		stroke-width: 3;
	}
	.modal-title {
		position: relative;
		height: 57px;
		padding: 0 1px 2px 0;
		display: flex;
		align-items: center;
		gap: 14px;
		color: #dce6f3;
	}
	.modal-title h1 {
		margin-right: auto;
		font-size: 20px;
		font-weight: 400;
		letter-spacing: -0.35px;
		color: #f3f6fa;
	}
	.min {
		width: 14px;
		height: 2px;
		margin: 13px 1px 0 0;
		background: #dce6f3;
	}
	.modal-tabs {
		position: relative;
		height: 48px;
		display: flex;
		font-size: 14px;
		line-height: 48px;
	}
	.modal-tabs span {
		padding: 0 13px;
	}
	.modal-tabs .on {
		width: 190px;
		border-radius: 5px 5px 0 0;
		background: #fff;
		color: #444;
		white-space: nowrap;
	}
	.modal-body {
		position: relative;
		height: 395px;
		flex: none;
		padding: 36px 0 0 18px;
		overflow: hidden;
		font-size: 14px;
		white-space: nowrap;
	}
	.modal-body p {
		margin-bottom: 18px;
	}
	.modal-body b {
		font-weight: 600;
	}
	h5 {
		margin-top: -13px;
		font-size: 14px;
		font-weight: 600;
		line-height: 18px;
	}
	.styles {
		margin-top: 15px;
		display: grid;
		grid-template-columns: repeat(5, 108px);
		gap: 12px;
	}
	.style {
		height: 108px;
		padding-bottom: 2px;
		display: flex;
		flex-direction: column;
		align-items: center;
		justify-content: center;
		border: 2px solid #d9d9d9;
		font: 700 6.6px/10px Roboto, sans-serif;
		letter-spacing: -0.1px;
		color: #b4b4b4;
	}
	.style.selected {
		border-color: #3a3a3a;
	}
	.style.low {
		padding-bottom: 4px;
	}
	.style .strong {
		color: #111;
	}
	.style hr {
		width: 78px;
		height: 1px;
		margin: 2px 0;
		border: 0;
		background: #ddd;
	}
	.inner-thumb {
		position: absolute;
		right: 0;
		top: 3px;
		width: 6px;
		height: 174px;
		border-radius: 3px;
		background: #c1c1c1;
	}
	.modal-body::after {
		content: '';
		position: absolute;
		right: 9px;
		top: 0;
		width: 1px;
		height: 395px;
		background: #e8e8e8;
	}
	.modal-foot {
		position: relative;
		flex: 1;
		padding: 18px;
		display: flex;
		gap: 10px;
		background: #f5f5f5;
	}
	.modal-foot button {
		width: 140px;
		height: 48px;
		padding: 0 1px 1px 0;
		border: 0;
		border-radius: 3px;
		background: #2b4f88;
		color: #fff;
		font-size: 14px;
	}
	.modal-foot .grey {
		background: #bababa;
		color: #f5f5f5;
	}
	.grip {
		position: absolute;
		right: 49px;
		bottom: -7px;
		width: 8px;
		height: 7px;
		background: linear-gradient(135deg, transparent 50%, #777 50%);
	}

	.marker {
		position: absolute;
		left: 0;
		top: 0;
		pointer-events: none;
	}
	.marker ellipse {
		fill: none;
		stroke: #e42112;
		stroke-width: 9.500;
	}
</style>
